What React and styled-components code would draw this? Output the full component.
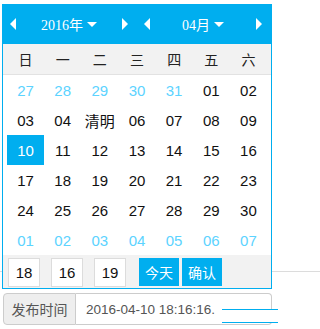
import React from "react";
import styled, { createGlobalStyle } from "styled-components";

const BLUE = "#00aeef";
const PALE = "#5cd3ff";

const Global = createGlobalStyle`
  html, body { margin: 0; padding: 0; background: #fff; }
  body {
    font-family: "Liberation Sans", "Noto Sans CJK SC", sans-serif;
    background: linear-gradient(to bottom, transparent 271px, #dcdcdc 271px, #dcdcdc 272px, transparent 272px) no-repeat;
    background-size: 100% 329px;
  }
`;

const Page = styled.div`
  padding: 4px 0 0 2px;
  width: 273px;
`;

const Calendar = styled.div`
  width: 270px;
  box-sizing: border-box;
  border: 1px solid ${BLUE};
  border-top: none;
  background: #fff;
  position: relative;
  z-index: 2;
`;

const Header = styled.div`
  height: 40px;
  margin: 0 -1px;
  background: ${BLUE};
  display: grid;
  grid-template-columns: 135px 135px;
`;

const Half = styled.div`
  display: flex;
  align-items: center;
  justify-content: space-between;
  padding: ${(p) => p.$pad};
`;

const Arrow = styled.span`
  width: 0;
  height: 0;
  border-top: 6.5px solid transparent;
  border-bottom: 6.5px solid transparent;
  ${(p) => (p.$dir === "left" ? `border-right: 6px solid #fff;` : `border-left: 6px solid #fff;`)}
`;

const Label = styled.span`
  display: flex;
  align-items: center;
  gap: 4px;
  color: #fff;
  font-size: 14px;
  font-family: "Liberation Serif", "Noto Sans CJK SC", serif;
`;

const Caret = styled.span`
  width: 0;
  height: 0;
  border-left: 5px solid transparent;
  border-right: 5px solid transparent;
  border-top: 5px solid #fff;
  margin-top: 1px;
`;

const Grid = styled.div`
  display: grid;
  grid-template-columns: repeat(7, 1fr);
  padding: 0 4px;
`;

const WeekRow = styled(Grid)`
  height: 30px;
  background: #f2f2f2;
  border-bottom: 1px solid #e2e2e2;
`;

const WeekCell = styled.div`
  display: flex;
  align-items: center;
  justify-content: center;
  font-size: 14px;
  color: #222;
  font-family: "Noto Sans CJK SC", sans-serif;
`;

const Day = styled.div`
  height: 30px;
  display: flex;
  align-items: center;
  justify-content: center;
  font-size: 15px;
  color: ${(p) => (p.$sel ? "#fff" : p.$other ? PALE : "#111")};
  background: ${(p) => (p.$sel ? BLUE : "transparent")};
`;

const Footer = styled.div`
  height: 33px;
  background: #f2f2f2;
  display: flex;
  align-items: flex-start;
  padding: 3px 0 0 5px;
  box-sizing: border-box;
`;

const TimeBox = styled.div`
  width: 32px;
  height: 29px;
  box-sizing: border-box;
  border: 1px solid #dcdcdc;
  background: #fff;
  display: flex;
  align-items: center;
  justify-content: center;
  font-size: 15px;
  color: #111;
  margin-right: ${(p) => p.$mr}px;
`;

const Btn = styled.div`
  width: 40px;
  height: 28px;
  background: ${BLUE};
  color: #fff;
  font-size: 14px;
  font-family: "Noto Sans CJK SC", sans-serif;
  display: flex;
  align-items: center;
  justify-content: center;
  margin-right: ${(p) => p.$mr}px;
`;

const InputGroup = styled.div`
  margin: 4px 0 0 1px;
  width: 269px;
  height: 32px;
  display: flex;
  position: relative;
`;

const Addon = styled.div`
  width: 73px;
  box-sizing: border-box;
  background: #eee;
  border: 1px solid #ccc;
  border-radius: 4px 0 0 4px;
  color: #555;
  font-size: 14px;
  font-family: "Noto Sans CJK SC", sans-serif;
  display: flex;
  align-items: center;
  justify-content: center;
`;

const Input = styled.div`
  flex: 1;
  box-sizing: border-box;
  border: 1px solid #ccc;
  border-left: none;
  border-radius: 0 4px 4px 0;
  color: #555;
  font-size: 13.5px;
  padding-left: 10px;
  display: flex;
  align-items: center;
  white-space: nowrap;
  overflow: hidden;
`;

const Glint = styled.div`
  position: absolute;
  left: 219px;
  top: 16px;
  width: 56px;
  height: 12px;
  border-top: 1.5px solid ${BLUE};
  border-bottom: 1.5px solid ${BLUE};
  background: linear-gradient(to right, rgba(255,255,255,0.2), #fff 24px);
`;

const prev = ["27", "28", "29", "30", "31"];
const rows = [];
{
  const cells = prev.map((d) => ({ d, other: true }));
  for (let i = 1; i <= 30; i++) {
    cells.push({ d: i === 5 ? "清明" : i < 10 ? "0" + i : String(i), sel: i === 10 });
  }
  for (let i = 1; i <= 7; i++) cells.push({ d: "0" + i, other: true });
  for (let r = 0; r < 6; r++) rows.push(cells.slice(r * 7, r * 7 + 7));
}

export default function App() {
  return (
    <>
      <Global />
      <Page>
        <Calendar>
          <Header>
            <Half $pad="0 9px 0 8px">
              <Arrow $dir="left" />
              <Label>2016年<Caret /></Label>
              <Arrow $dir="right" />
            </Half>
            <Half $pad="0 10px 0 7px">
              <Arrow $dir="left" />
              <Label>04月<Caret /></Label>
              <Arrow $dir="right" />
            </Half>
          </Header>
          <WeekRow>
            {["日", "一", "二", "三", "四", "五", "六"].map((w) => (
              <WeekCell key={w}>{w}</WeekCell>
            ))}
          </WeekRow>
          <Grid>
            {rows.flat().map((c, i) => (
              <Day key={i} $other={c.other} $sel={c.sel}>
                {c.d}
              </Day>
            ))}
          </Grid>
          <Footer>
            <TimeBox $mr={11}>18</TimeBox>
            <TimeBox $mr={11}>16</TimeBox>
            <TimeBox $mr={13}>19</TimeBox>
            <Btn $mr={3}>今天</Btn>
            <Btn $mr={0}>确认</Btn>
          </Footer>
        </Calendar>
        <InputGroup>
          <Addon>发布时间</Addon>
          <Input>2016-04-10 18:16:16.</Input>
          <Glint />
        </InputGroup>
      </Page>
    </>
  );
}
